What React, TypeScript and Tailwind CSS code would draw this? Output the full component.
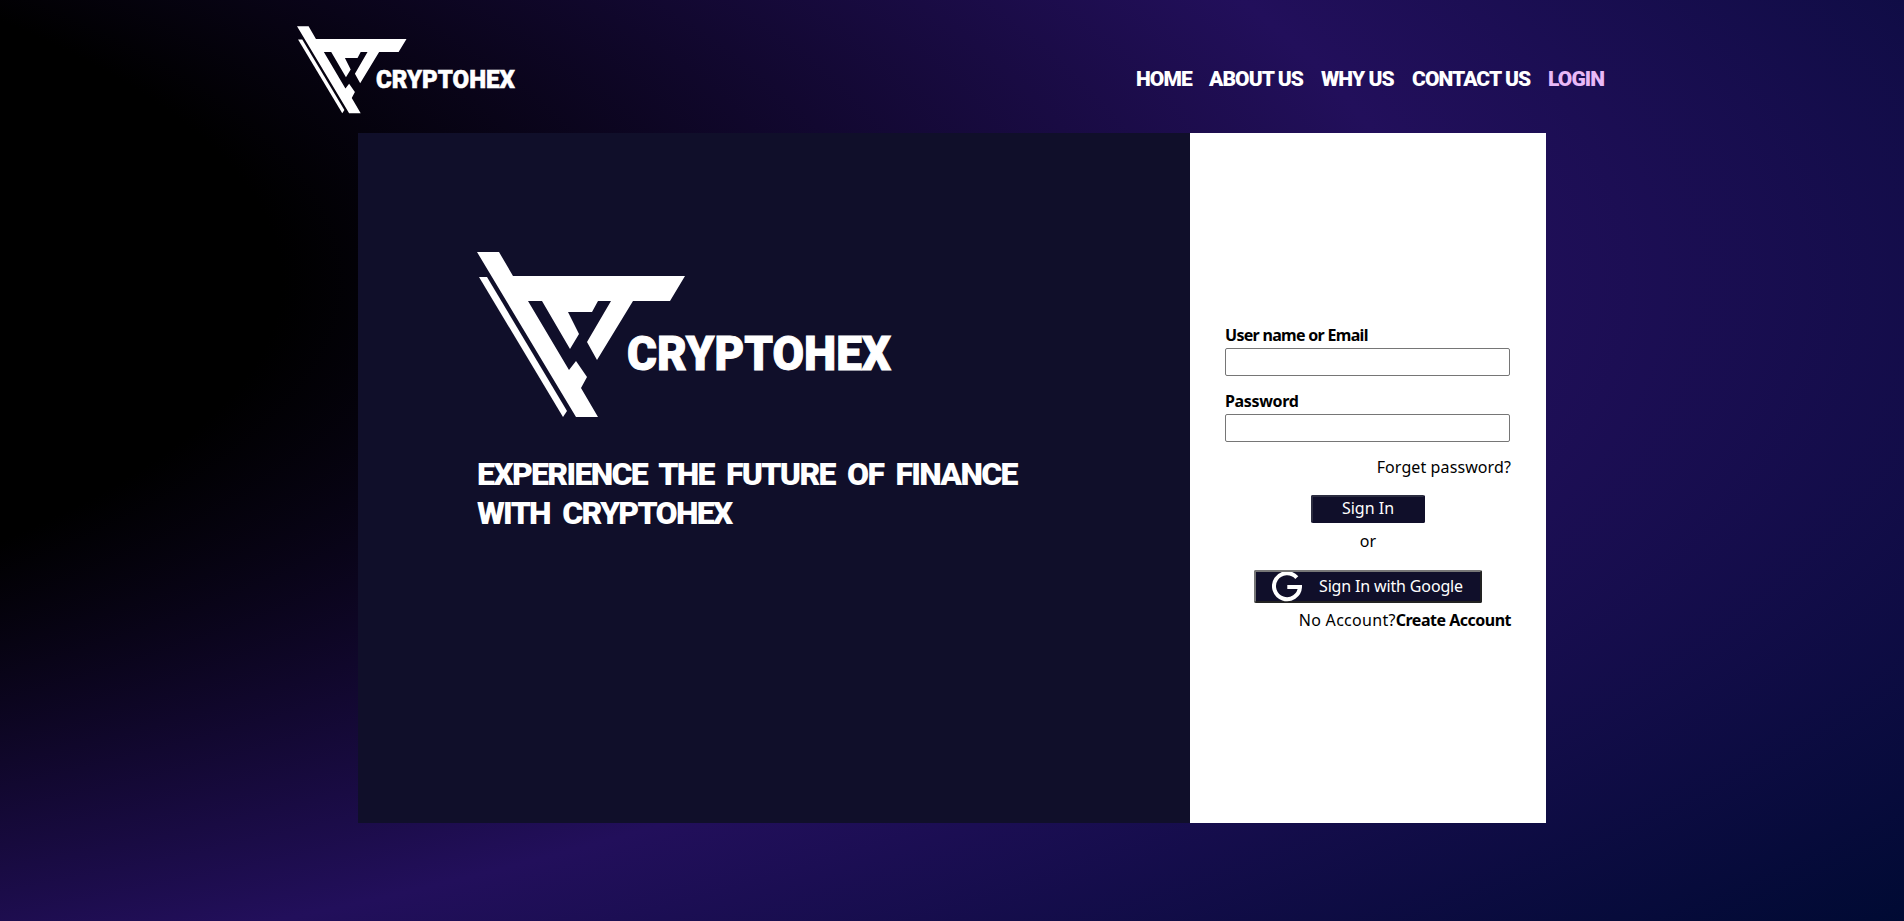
const LogoMark = () => (
  <g fill="#fff">
    <path d="M0 0H22L36 24H208L193 49H156L120 108L110 90L134 49H121L115 60H91L102 82L93 97L65 49H51L92 118L99 109L110 125L104 136L121 165H99Z" />
    <path d="M2 25H10L90 159L86 165Z" />
  </g>
);

const Logo = ({ className }: { className: string }) => (
  <svg viewBox="0 0 416 166" className={`overflow-visible ${className}`} aria-label="Cryptohex">
    <LogoMark />
    <text
      x="150"
      y="117.8"
      fill="#fff"
      stroke="#fff"
      strokeWidth="1"
      fontSize="48"
      fontWeight="900"
      fontFamily="Roboto, 'Liberation Sans', sans-serif"
      textLength="264"
      lengthAdjust="spacingAndGlyphs"
    >
      CRYPTOHEX
    </text>
  </svg>
);

const GoogleIcon = () => (
  <svg viewBox="0 0 30 30" className="h-[30px] w-[30px] shrink-0" fill="none" stroke="#fff" strokeWidth="4">
    <path d="M24.8 5.6A13 13 0 1 0 28 15H15.3" />
  </svg>
);

const links = [
  { label: 'HOME', width: 'w-[57px]' },
  { label: 'ABOUT US', width: 'w-[96px]' },
  { label: 'WHY US', width: 'w-[75px]' },
  { label: 'CONTACT US', width: 'w-[120px]' },
  { label: 'LOGIN', width: 'w-[58px]' },
];

const inputClass = 'h-7 w-[285px] rounded-xs border border-[#767676] bg-white px-1 outline-none';
const labelClass = 'h-[25px] leading-6 font-bold';

export default function App() {
  return (
    <div className="h-[921px] w-full overflow-hidden bg-[radial-gradient(206.7%_122.2%_at_-70%_30.5%,#000_41%,#220f5b_70%,#000a33_100%)] font-['Noto_Sans',sans-serif] text-base text-black">
      <header className="mx-auto flex h-[133px] w-[1308px] items-start justify-between pt-[26px]">
        <Logo className="-ml-px h-[88px] w-[219px]" />
        <nav className="mt-[39px] flex gap-4 font-['Roboto',sans-serif] text-[21px] leading-7 font-black tracking-[-0.9px] text-white">
          {links.map((l) => (
            <a key={l.label} href="#" className={`${l.width} whitespace-nowrap last:text-[#e9b8f7]`}>
              {l.label}
            </a>
          ))}
        </nav>
      </header>
      <main className="mx-auto flex h-[690px] w-[1188px]">
        <section className="w-[832px] bg-[#100f2a] px-[119px] pt-[119px]">
          <Logo className="h-[166px] w-[416px]" />
          <h1 className="mt-[37px] font-['Roboto',sans-serif] text-[32px] leading-[39px] font-black tracking-[-1.7px] whitespace-nowrap text-white [word-spacing:6px]">
            EXPERIENCE THE FUTURE OF FINANCE
            <br />
            WITH CRYPTOHEX
          </h1>
        </section>
        <section className="flex w-[356px] flex-col bg-white px-[35px] pt-[190px]">
          <label htmlFor="user" className={`${labelClass} tracking-[-0.7px]`}>
            User name or Email
          </label>
          <input id="user" className={inputClass} />
          <label htmlFor="password" className={`${labelClass} mt-[13px] tracking-[-0.35px]`}>
            Password
          </label>
          <input id="password" type="password" className={inputClass} />
          <a href="#" className="mt-[13px] self-end leading-6 tracking-[0.1px]">
            Forget password?
          </a>
          <button className="mt-4 h-7 w-[114px] self-center rounded-xs border-2 border-t-[#2b2c40] border-r-[#100f2a] border-b-[#100f2a] border-l-[#2b2c40] bg-[#100f2a] pb-0.5 leading-[22px] text-white">
            Sign In
          </button>
          <p className="mt-1.5 text-center leading-6">or</p>
          <button className="mt-[17px] flex h-[33px] w-[228px] items-center gap-[17px] self-center rounded-xs border-2 border-t-[#767676] border-r-[#222] border-b-[#222] border-l-[#767676] bg-[#100f2a] pl-[16px] tracking-[-0.15px] whitespace-nowrap text-white">
            <GoogleIcon />
            <span className="pb-0.5">Sign In with Google</span>
          </button>
          <p className="mt-[5px] text-right leading-6 tracking-[0.3px]">
            No Account?<b className="font-bold tracking-[-0.5px]">Create Account</b>
          </p>
        </section>
      </main>
    </div>
  );
}
